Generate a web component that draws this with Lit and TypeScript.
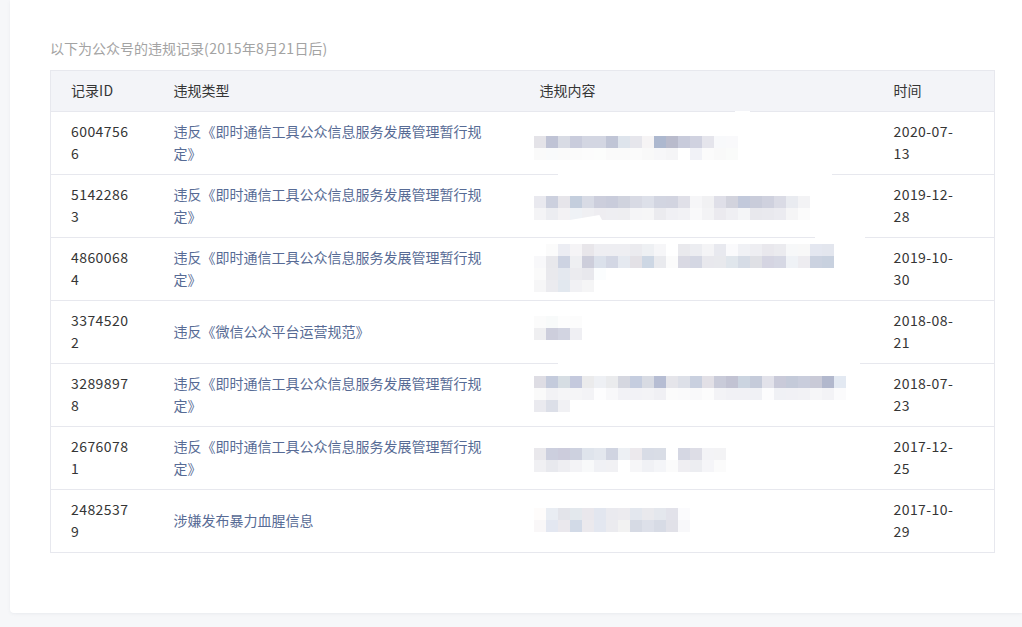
import { LitElement, html, css } from "lit";
import { customElement } from "lit/decorators.js";

const LONG = "违反《即时通信工具公众信息服务发展管理暂行规定》";

type Row = { id: string; type: string; date: string; top: number; blur: string[] };

const ROWS: Row[] = [
  { id: "60047566", type: LONG, date: "2020-07-13", top: 24, blur: [
    "e4e3e8 bfc3d5 d8dbe4 c9ccdc d3d6e2 d3d6e2 c0c5d6 dee4ec e6e6ec f6f4f5 adb8cf b9bbcc c8cbdb d0d2e0 e5e5ec f8f9fb f9f9fb",
    "fafafa f9fafb fafafa fbfbfb fcfcfc fcfdfc fafafa fafafa fbfbfb f9f9f9 f7f7f9 f5f5f7 ffffff f1f2f7 fbfbfb f9f9f9 fafbfa",
  ] },
  { id: "51422863", type: LONG, date: "2019-12-28", top: 21, blur: [
    "e9e9ef ccd0de e6e5ea c4cedd d8dbe5 ccceDC c9ccdb d0d3de d8dae4 dde0e9 d2d5e1 d2d4e0 e0e0e8 f6f6f8 f1f1f3 dfdfe8 d2d3dd c2c9db c9ccda cfd1de dadbe5 e9ebf0 f3f3f5",
    "f4f4f6 ecedf1 f3f2f4 eff2f6 f0f0f3 eeedf1 eeeef2 eeeef1 f5f5f7 f6f6f7 ebebef f0f0f4 f2f2f5 f9f9fa f3f3f5 ebeaef efeff3 f4f5f7 e8e8ed e9e9ee ebebf0 f5f5f6 fbfbfb",
  ] },
  { id: "48600684", type: LONG, date: "2019-10-30", top: 6, blur: [
    "ffffff fbfbfb ecedf3 f5f4f6 e8e6ea eeeef2 eeeef2 eeeef2 ebebef eef0f3 f6f6f8 ffffff e9e9ed ecedf1 f4f4f6 e8e9ef fafafc f0f1f5 eeeef2 e9e8ed ebebef f7f8f9 f8f8f8 e4e7f0 e3e6ee",
    "f8f8fa e8e8ec cdd3e2 eeeff2 cdcedb dbe1eb d3d7e4 e5e9f0 e3e1e6 cdd7e4 e9eaee fbfbfb d9d9e3 d4d7e3 e8e8ed e8e9ed e0e6ec d6dce6 dfe0e5 d5d5e2 d6d8e4 eff2f6 edecf0 cbd2e0 c8d1df",
    "fafafa e9e9ed e4e8ef ebebef e8e8ed fbfdfe",
    "f6f6f7 ebebef e2e8ef f1f1f4 f5f5f6",
  ] },
  { id: "33745202", type: "违反《微信公众平台运营规范》", date: "2018-08-21", top: 15, blur: [
    "fbfbfb f8fafa fdfdfd fcfcfc",
    "efeff1 cdcedc d2d4e1 efeff3",
  ] },
  { id: "32898978", type: LONG, date: "2018-07-23", top: 12, blur: [
    "dedde4 c4cbdc d6dde3 c4c9dd ebebec eef0f4 eaebed d5d7e0 c5cddf d8dbe3 b6bdd3 e5e5ea dde0e8 c9d0df e2e0e6 c9cbd9 c2c3d3 cbd4e0 c5cbda e2e2ea c9cad9 c4cad9 c9cddc c9cad7 b2b8cd e3e9f2",
    "fafafa f2f2f5 f5f5f7 f5f5f7 f3f3f6 fdfdfe f8f8fa f2f2f6 f2f2f6 f3f3f6 f0f0f4 fbfbfb fafafb f9f9fa fcfcfc f3f3f6 f1f1f5 f1f1f5 f0f1f5 fcfcfd f0f1f5 f1f1f5 f2f2f5 f6f6f8 f3f3f6 fbfbfc",
    "eaeaef dcdfe8 f1f1f4",
  ] },
  { id: "26760781", type: LONG, date: "2017-12-25", top: 21, blur: [
    "e9e8ec cccfde ccccdc cdd1df dfe4ec e3e7ee d0d4e1 edf0f4 ece9ed d8dce6 d9dde6 ffffff d5d7e3 dddde6 f3f3f6 f3f3f5",
    "f0f0f3 e8e9ee eeeef2 f3f3f6 f8f9fa f0f1f5 f1f1f4 ffffff f6f6f8 f0f1f5 f4f5f8 fbfbfb efeef2 ecedf1 f5f5f8 fbfbfb",
  ] },
  { id: "24825379", type: "涉嫌发布暴力血腥信息", date: "2017-10-29", top: 18, blur: [
    "fefcfb e9edf3 e3e4ea e3e8ed e9e7ec e2e6ef eaeaef ecebef e3e7ee e9e9ed e4e7ed e2e2ea fbfbfd",
    "f9f7f8 e3e7f1 eae8ed d2dae7 ebe9ed e3e7f0 ebebef f2f2f2 d6dae4 dde0e9 d7dbe5 e1e1e8 f8f8fa",
  ] },
];

/* White smears left by the retouching, lying over the row rules (x, y relative to the table box). */
const PATCHES = [
  [685, 41, 15, 1],
  [508, 104, 274, 1],
  [765, 167, 50, 1],
  [508, 293, 302, 1],
];

@customElement("app-root")
export class AppRoot extends LitElement {
  static styles = css`
    :host {
      display: block;
      min-height: 627px;
      background: #f6f7f9;
      font-family: "Noto Sans CJK SC", "Noto Sans", sans-serif;
      font-size: 14px;
      line-height: 22px;
      color: #353535;
      overflow: hidden;
    }
    .card {
      margin-left: 10px;
      height: 613px;
      box-sizing: border-box;
      padding: 37px 27px 0 40px;
      background: #fff;
      border-radius: 0 0 0 4px;
      box-shadow: 0 1px 3px rgba(150, 155, 170, 0.12);
    }
    .note {
      height: 22px;
      margin-bottom: 11px;
      color: #a3a3a3;
    }
    .latin {
      letter-spacing: 0.42px;
    }
    .wrap {
      position: relative;
      width: 945px;
    }
    table {
      width: 945px;
      table-layout: fixed;
      border-collapse: collapse;
      border: 1px solid #e7e8ee;
    }
    th {
      height: 41px;
      padding: 0 0 2px 20px;
      box-sizing: border-box;
      background: #f3f4f8;
      border-bottom: 1px solid #e7e8ee;
      font-weight: 400;
      text-align: left;
    }
    td {
      height: 63px;
      padding: 0 20px 2px;
      box-sizing: border-box;
      border-top: 1px solid #e7e8ee;
      vertical-align: middle;
      word-break: break-all;
    }
    td.num {
      letter-spacing: 0.42px;
    }
    td.date {
      padding-right: 36px;
    }
    td.type {
      padding-right: 34px;
      color: #576b95;
    }
    td.pic {
      padding: 0 0 0 14px;
      vertical-align: top;
    }
    .line {
      display: flex;
      height: 12px;
    }
    .cell {
      flex: 0 0 12px;
      height: 12px;
    }
    .patch {
      position: absolute;
      background: #fff;
    }
    .wedge {
      position: absolute;
      left: 520px;
      top: 145px;
      width: 32px;
      height: 5px;
      background: #fff;
      clip-path: polygon(0 100%, 92% 0, 100% 100%);
    }
  `;

  render() {
    return html`
      <div class="card">
        <div class="note">以下为公众号的违规记录<span class="latin">(2015</span>年<span class="latin">8</span>月<span class="latin">21</span>日后<span class="latin">)</span></div>
        <div class="wrap">
          <table>
            <colgroup>
              <col style="width:103px" />
              <col style="width:366px" />
              <col style="width:354px" />
              <col />
            </colgroup>
            <thead>
              <tr>
                <th>记录<span class="latin">ID</span></th>
                <th>违规类型</th>
                <th>违规内容</th>
                <th>时间</th>
              </tr>
            </thead>
            <tbody>
              ${ROWS.map(
                (r) => html`
                  <tr>
                    <td class="num">${r.id}</td>
                    <td class="type">${r.type}</td>
                    <td class="pic">
                      <div style="margin-top:${r.top}px">
                        ${r.blur.map(
                          (l) => html`<div class="line">
                            ${l.split(" ").map((c) => html`<span class="cell" style="background:#${c}"></span>`)}
                          </div>`
                        )}
                      </div>
                    </td>
                    <td class="num date">${r.date}</td>
                  </tr>
                `
              )}
            </tbody>
          </table>
          ${PATCHES.map(
            ([x, y, w, h]) =>
              html`<span class="patch" style="left:${x}px;top:${y}px;width:${w}px;height:${h}px"></span>`
          )}
          <span class="wedge"></span>
        </div>
      </div>
    `;
  }
}
